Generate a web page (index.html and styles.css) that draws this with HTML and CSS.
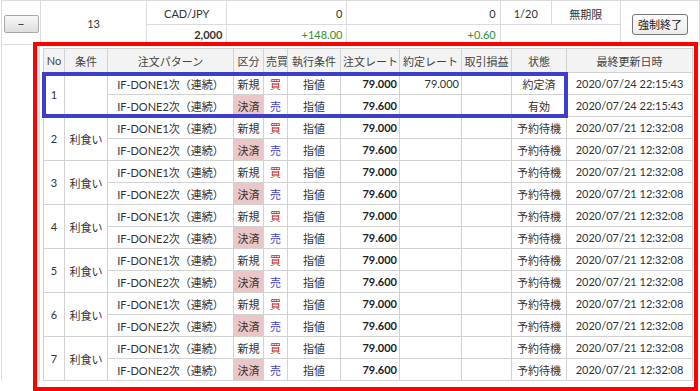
FILE: index.html
```html
<!DOCTYPE html>
<html lang="ja">
<head>
<meta charset="utf-8">
<link rel="stylesheet" href="styles.css">
</head>
<body>
<div class="page">
  <table class="summary">
    <colgroup>
      <col class="c-btn"><col class="c-no"><col class="c-pair"><col class="c-a"><col class="c-b"><col class="c-c"><col class="c-d"><col class="c-e">
    </colgroup>
    <tr class="r1">
      <td rowspan="2" class="center"><button class="minus">−</button></td>
      <td rowspan="2" class="center">13</td>
      <td class="center">CAD/JPY</td>
      <td class="right">0</td>
      <td class="right">0</td>
      <td class="center">1/20</td>
      <td class="center">無期限</td>
      <td rowspan="2" class="center"><button class="stop">強制終了</button></td>
    </tr>
    <tr class="r2">
      <td class="right bold">2,000</td>
      <td class="right green">+148.00</td>
      <td class="right green">+0.60</td>
      <td colspan="2"></td>
    </tr>
  </table>

  <div class="detail">
    <div class="detail-cell">
      <table class="orders">
        <colgroup>
          <col style="width:21px"><col style="width:43px"><col style="width:126px"><col style="width:30px"><col style="width:24px"><col style="width:53px"><col style="width:59px"><col style="width:62px"><col style="width:50px"><col style="width:55px"><col style="width:126px">
        </colgroup>
        <thead>
          <tr>
            <th>No</th><th>条件</th><th>注文パターン</th><th>区分</th><th>売買</th><th>執行条件</th><th>注文レート</th><th>約定レート</th><th>取引損益</th><th>状態</th><th>最終更新日時</th>
          </tr>
        </thead>
        <tbody>
          <tr>
            <td rowspan="2">1</td><td rowspan="2"></td>
            <td>IF-DONE1次（連続）</td><td>新規</td><td class="buy">買</td><td>指値</td><td class="rate">79.000</td><td class="num">79.000</td><td></td><td>約定済</td><td>2020/07/24 22:15:43</td>
          </tr>
          <tr>
            <td>IF-DONE2次（連続）</td><td class="settle">決済</td><td class="sell">売</td><td>指値</td><td class="rate">79.600</td><td></td><td></td><td>有効</td><td>2020/07/24 22:15:43</td>
          </tr>
          <tr>
            <td rowspan="2">2</td><td rowspan="2">利食い</td>
            <td>IF-DONE1次（連続）</td><td>新規</td><td class="buy">買</td><td>指値</td><td class="rate">79.000</td><td></td><td></td><td>予約待機</td><td>2020/07/21 12:32:08</td>
          </tr>
          <tr>
            <td>IF-DONE2次（連続）</td><td class="settle">決済</td><td class="sell">売</td><td>指値</td><td class="rate">79.600</td><td></td><td></td><td>予約待機</td><td>2020/07/21 12:32:08</td>
          </tr>
          <tr>
            <td rowspan="2">3</td><td rowspan="2">利食い</td>
            <td>IF-DONE1次（連続）</td><td>新規</td><td class="buy">買</td><td>指値</td><td class="rate">79.000</td><td></td><td></td><td>予約待機</td><td>2020/07/21 12:32:08</td>
          </tr>
          <tr>
            <td>IF-DONE2次（連続）</td><td class="settle">決済</td><td class="sell">売</td><td>指値</td><td class="rate">79.600</td><td></td><td></td><td>予約待機</td><td>2020/07/21 12:32:08</td>
          </tr>
          <tr>
            <td rowspan="2">4</td><td rowspan="2">利食い</td>
            <td>IF-DONE1次（連続）</td><td>新規</td><td class="buy">買</td><td>指値</td><td class="rate">79.000</td><td></td><td></td><td>予約待機</td><td>2020/07/21 12:32:08</td>
          </tr>
          <tr>
            <td>IF-DONE2次（連続）</td><td class="settle">決済</td><td class="sell">売</td><td>指値</td><td class="rate">79.600</td><td></td><td></td><td>予約待機</td><td>2020/07/21 12:32:08</td>
          </tr>
          <tr>
            <td rowspan="2">5</td><td rowspan="2">利食い</td>
            <td>IF-DONE1次（連続）</td><td>新規</td><td class="buy">買</td><td>指値</td><td class="rate">79.000</td><td></td><td></td><td>予約待機</td><td>2020/07/21 12:32:08</td>
          </tr>
          <tr>
            <td>IF-DONE2次（連続）</td><td class="settle">決済</td><td class="sell">売</td><td>指値</td><td class="rate">79.600</td><td></td><td></td><td>予約待機</td><td>2020/07/21 12:32:08</td>
          </tr>
          <tr>
            <td rowspan="2">6</td><td rowspan="2">利食い</td>
            <td>IF-DONE1次（連続）</td><td>新規</td><td class="buy">買</td><td>指値</td><td class="rate">79.000</td><td></td><td></td><td>予約待機</td><td>2020/07/21 12:32:08</td>
          </tr>
          <tr>
            <td>IF-DONE2次（連続）</td><td class="settle">決済</td><td class="sell">売</td><td>指値</td><td class="rate">79.600</td><td></td><td></td><td>予約待機</td><td>2020/07/21 12:32:08</td>
          </tr>
          <tr>
            <td rowspan="2">7</td><td rowspan="2">利食い</td>
            <td>IF-DONE1次（連続）</td><td>新規</td><td class="buy">買</td><td>指値</td><td class="rate">79.000</td><td></td><td></td><td>予約待機</td><td>2020/07/21 12:32:08</td>
          </tr>
          <tr>
            <td>IF-DONE2次（連続）</td><td class="settle">決済</td><td class="sell">売</td><td>指値</td><td class="rate">79.600</td><td></td><td></td><td>予約待機</td><td>2020/07/21 12:32:08</td>
          </tr>
        </tbody>
      </table>
    </div>
  </div>

  <div class="mark mark-red"></div>
  <div class="mark mark-blue"></div>
</div>
</body>
</html>
```

FILE: styles.css
```css
html, body {
  margin: 0;
  padding: 0;
  background: #fff;
}
body {
  width: 700px;
  height: 391px;
  overflow: hidden;
  font-family: "Lato", "Noto Sans CJK JP", sans-serif;
  font-size: 11px;
  color: #333;
}
.page {
  position: relative;
  width: 700px;
}

/* summary table */
.summary {
  border-collapse: collapse;
  table-layout: fixed;
  width: 699px;
  margin-left: 1px;
}
.summary td {
  border: 1px solid #dcdcdc;
  padding: 0 4px;
  white-space: nowrap;
}
.summary tr.r1 td { height: 21px; padding-top: 2px; padding-bottom: 0; }
.summary tr.r2 td { height: 19px; }
.c-btn { width: 39px; }
.c-no { width: 106px; }
.c-pair { width: 80px; }
.c-a { width: 120px; }
.c-b { width: 153px; }
.c-c { width: 51px; }
.c-d { width: 69px; }
.c-e { width: 79px; }
.center { text-align: center; }
.right { text-align: right; }
.bold { font-weight: bold; }
.green { color: #2f8f2f; }

.minus {
  width: 35px;
  height: 18px;
  padding: 0;
  border: 1px solid #aaa;
  border-radius: 2px;
  background: linear-gradient(#f8f8f8, #dedede);
  font-family: "Lato", sans-serif;
  font-size: 12px;
  color: #222;
  line-height: 14px;
  margin-top: 2px;
}
.summary td.center:first-child { padding: 0; }
.stop {
  height: 21px;
  padding: 0 5px;
  border: 1px solid #777;
  border-radius: 3px;
  background: linear-gradient(#fdfdfd, #ececec);
  font-family: "Noto Sans CJK JP", sans-serif;
  font-size: 11px;
  color: #222;
  line-height: 17px;
  margin-top: 2px;
}

/* detail */
.detail {
  border-left: 1px solid #dcdcdc;
  margin-left: 1px;
  padding-left: 37px;
}
.detail-cell {
  border-left: 1px solid #dcdcdc;
  padding: 3px 0 0 3px;
}

.orders {
  border-collapse: collapse;
  table-layout: fixed;
  width: 650px;
}
.orders th, .orders td {
  border: 1px solid #d2d2d2;
  text-align: center;
  white-space: nowrap;
  padding: 0 2px;
  overflow: hidden;
}
.orders th {
  background: #f3f3f3;
  font-weight: normal;
  height: 23px;
  color: #444;
}
.orders td {
  height: 21px;
}
.orders td.rate {
  text-align: right;
  font-weight: bold;
  color: #222;
}
.orders td.num { text-align: right; }
.orders td.settle { background: #ebc6c6; }
.orders td.buy { color: #c81818; }
.orders td.sell { color: #4343c4; }

/* annotation overlays */
.mark {
  position: absolute;
  box-sizing: border-box;
  pointer-events: none;
}
.mark-red {
  left: 33px;
  top: 42px;
  width: 665px;
  height: 349px;
  border: 4px solid #ff0000;
}
.mark-blue {
  left: 42px;
  top: 72px;
  width: 526px;
  height: 46px;
  border: 4px solid #3b3fcb;
}
```
